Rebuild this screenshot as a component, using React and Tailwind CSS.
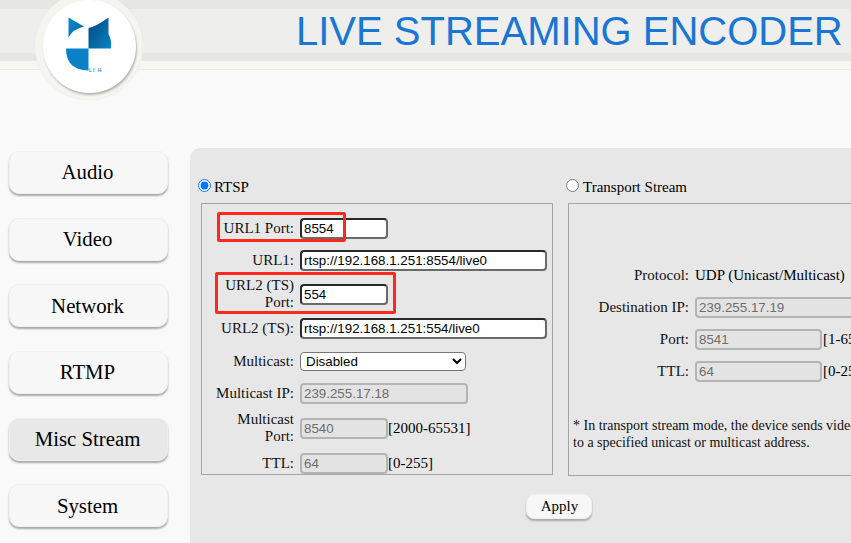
const navItems = ['Audio', 'Video', 'Network', 'RTMP', 'Misc Stream', 'System'];

function Logo() {
  return (
    <div className="absolute left-[35px] top-[-8px] z-10 flex h-[108px] w-[108px] items-center justify-center rounded-full bg-[#f5f5f0] shadow-[0_0_1px_#dddddd]">
      <div className="flex h-[93px] w-[93px] items-center justify-center rounded-full bg-white shadow-[1px_2px_2px_#b5b5b5]">
        <svg width="93" height="93" viewBox="0 0 93 93">
          <defs>
            <linearGradient id="ear" x1="0" y1="0" x2="1" y2="1">
              <stop offset="0" stopColor="#0a8ccc" />
              <stop offset="1" stopColor="#0565a3" />
            </linearGradient>
            <linearGradient id="top" x1="0" y1="0" x2="1" y2="1">
              <stop offset="0" stopColor="#00467f" />
              <stop offset="1" stopColor="#0a85c4" />
            </linearGradient>
          </defs>
          <path d="M25.500 17.500 L41 26.500 Q30 29 25.500 37.500 Z" fill="url(#ear)" />
          <path d="M45.500 28 Q53 26.500 65.500 17.500 L65.500 34 Q69 40 68 48.500 L45.500 48.500 Z" fill="url(#top)" />
          <path d="M23 48.500 L45.500 48.500 L45.500 70.500 Q23 70 23 48.500 Z" fill="#0881c7" />
          <text x="46" y="71.500" fontSize="5" fontWeight="bold" fontFamily="Liberation Sans, sans-serif" letterSpacing="1" fill="#2f93d2">LI H</text>
        </svg>
      </div>
    </div>
  );
}

function NavButton({ label, active }) {
  return (
    <button
      type="button"
      className={`h-[43px] w-[159px] rounded-[10px] border border-[#efefef] pb-[1px] pr-[2px] text-[20.8px] text-black shadow-[0_2px_2px_#a8a8a8] ${
        active ? 'bg-[#e8e8e8]' : 'bg-[#f7f7f7]'
      }`}
    >
      {label}
    </button>
  );
}

function Field({ value, width, disabled }) {
  return (
    <input
      defaultValue={value}
      disabled={disabled}
      className={`h-[21px] shrink-0 rounded-[4px] border-2 px-[2px] font-['Liberation_Sans',sans-serif] text-[13.33px] ${width} ${
        disabled
          ? 'border-[#b4b4b4] bg-[#e3e3e3] text-[#6d6d6d]'
          : 'border-[#2a2a2a] border-r-[#6a6a6a] border-b-[#6a6a6a] bg-white text-black'
      }`}
    />
  );
}

function Row({ label, height, labelWidth = 'w-[92px]', children }) {
  return (
    <div className={`flex items-center gap-[6px] ${height}`}>
      <div className={`shrink-0 text-right leading-[17px] text-[#111111] ${labelWidth}`}>{label}</div>
      {children}
    </div>
  );
}

export default function App() {
  return (
    <div className="relative h-[543px] w-[851px] overflow-hidden bg-[#f9f9f9] font-['Liberation_Serif',serif] text-[15px]">
      <header className="h-[70px] border-b border-[#ebebe8] bg-[#f7f7f2]">
        <div className="h-[61px] border-t-[9px] border-b-[8px] border-t-[#e6e6e3] border-b-[#e6e6e3] bg-[#eeeeec] pl-[296px]">
          <h1 className="whitespace-nowrap font-['Liberation_Sans',sans-serif] text-[40px] leading-[44px] text-[#1976d2]">
            LIVE STREAMING ENCODER
          </h1>
        </div>
      </header>
      <Logo />

      <div className="flex pl-[9px] pt-[78px]">
        <nav className="flex w-[181px] shrink-0 flex-col gap-[23.7px] pt-[3px]">
          {navItems.map((item) => (
            <NavButton key={item} label={item} active={item === 'Misc Stream'} />
          ))}
        </nav>

        <main className="h-[420px] w-[700px] shrink-0 rounded-tl-[10px] bg-[#e7e7e7] pl-[11px] pt-[29px]">
          <div className="flex gap-[15px]">
            <section className="w-[352px] shrink-0">
              <label className="flex h-[26px] items-start gap-[3px] leading-[21px]">
                <input type="radio" name="mode" defaultChecked className="mt-[2px] ml-[-3px] h-[13px] w-[13px]" />
                RTSP
              </label>
              <div className="h-[272px] overflow-hidden border border-[#a5a5a5] pt-[8px]">
                <Row label="URL1 Port:" height="h-[32px]"><Field value="8554" width="w-[88px]" /></Row>
                <Row label="URL1:" height="h-[32px]"><Field value="rtsp://192.168.1.251:8554/live0" width="w-[247px]" /></Row>
                <Row label={<>URL2 (TS)<br />Port:</>} height="h-[36px]"><Field value="554" width="w-[88px]" /></Row>
                <Row label="URL2 (TS):" height="h-[33px]"><Field value="rtsp://192.168.1.251:554/live0" width="w-[247px]" /></Row>
                <Row label="Multicast:" height="h-[32px]">
                  <select className="h-[19px] w-[166px] rounded-[4px] border border-[#767676] bg-white pl-[1px] font-['Liberation_Sans',sans-serif] text-[13.33px] text-black">
                    <option>Disabled</option>
                  </select>
                </Row>
                <Row label="Multicast IP:" height="h-[32px]"><Field value="239.255.17.18" width="w-[168px]" disabled /></Row>
                <Row label={<>Multicast<br />Port:</>} height="h-[38px]">
                  <Field value="8540" width="w-[88px]" disabled />
                  <span className="-ml-[6px]">[2000-65531]</span>
                </Row>
                <Row label="TTL:" height="h-[33px]">
                  <Field value="64" width="w-[88px]" disabled />
                  <span className="-ml-[6px]">[0-255]</span>
                </Row>
              </div>
            </section>

            <section className="w-[320px] shrink-0">
              <label className="flex h-[26px] items-start gap-[4px] leading-[21px]">
                <input type="radio" name="mode" className="mt-[2px] ml-[-2px] h-[13px] w-[13px]" />
                Transport Stream
              </label>
              <div className="h-[273px] border border-[#a5a5a5] pt-[55px]">
                <Row label="Protocol:" height="h-[32px]" labelWidth="w-[120px]">UDP (Unicast/Multicast)</Row>
                <Row label="Destination IP:" height="h-[32px]" labelWidth="w-[120px]"><Field value="239.255.17.19" width="w-[165px]" disabled /></Row>
                <Row label="Port:" height="h-[32px]" labelWidth="w-[120px]">
                  <Field value="8541" width="w-[127px]" disabled />
                  <span className="-ml-[5px]">[1-65531]</span>
                </Row>
                <Row label="TTL:" height="h-[32px]" labelWidth="w-[120px]">
                  <Field value="64" width="w-[127px]" disabled />
                  <span className="-ml-[5px]">[0-255]</span>
                </Row>
                <p className="whitespace-nowrap pl-[4px] pt-[30px] text-[14px] leading-[17px] text-[#111111]">
                  * In transport stream mode, the device sends video
                  <br />
                  to a specified unicast or multicast address.
                </p>
              </div>
            </section>
          </div>
          <div className="pl-[325px] pt-[18px]">
            <button
              type="button"
              className="h-[25px] w-[66px] rounded-[8px] border border-[#efefef] bg-[#f7f7f7] pb-[2px] pl-[1px] text-[15px] shadow-[0_2px_2px_#a8a8a8]"
            >
              Apply
            </button>
          </div>
        </main>
      </div>

      {/* red annotation boxes drawn on top of the form */}
      <div className="absolute left-[217px] top-[212px] h-[30px] w-[129px] rounded-[2px] border-[3px] border-[#fb2a1c]" />
      <div className="absolute left-[215px] top-[272px] h-[42px] w-[181px] rounded-[2px] border-[3px] border-[#fb2a1c]" />
    </div>
  );
}
